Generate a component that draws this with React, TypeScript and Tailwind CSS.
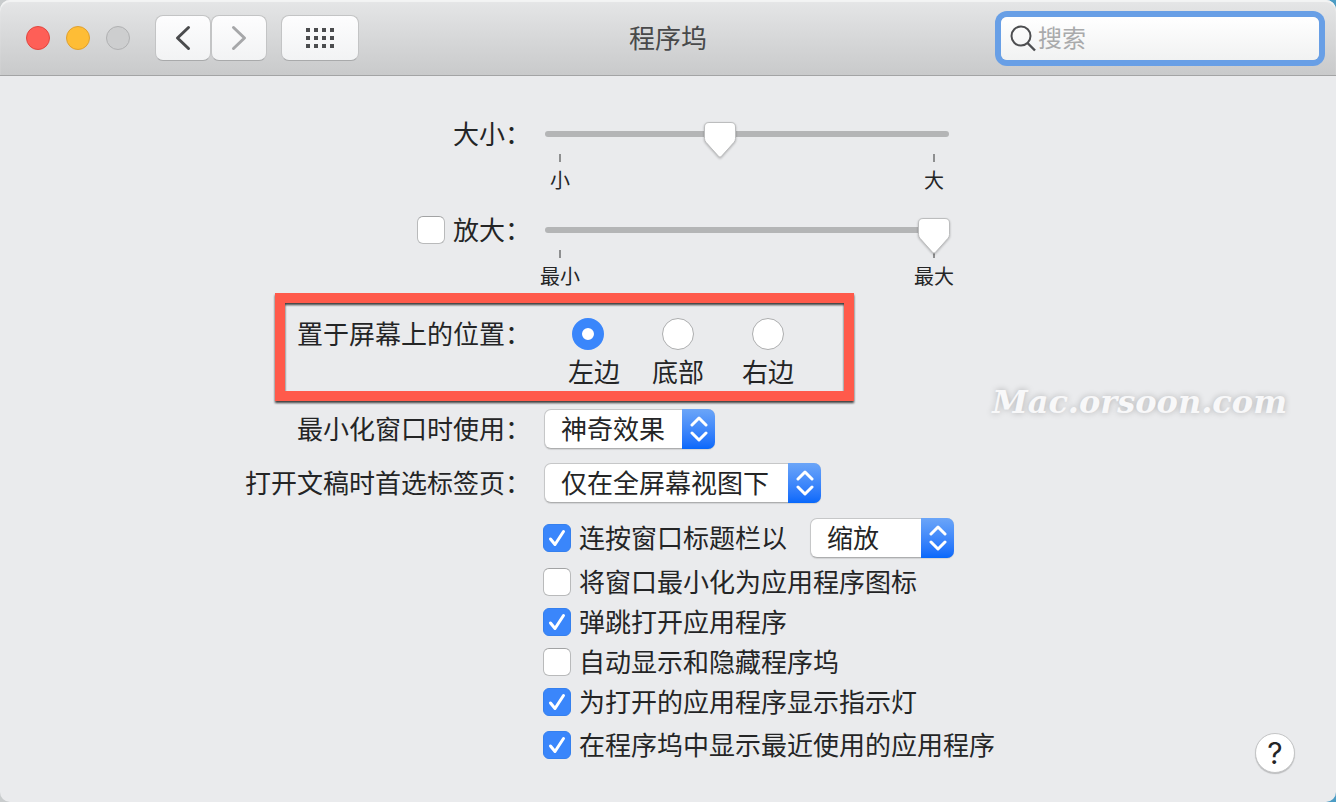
import React, { useState } from "react";

type RowProps = {
  label?: React.ReactNode;
  className?: string;
  children: React.ReactNode;
};

// Label on the left, control on the right
function Row({ label, className = "", children }: RowProps) {
  return (
    <div className={`grid grid-cols-[287px_1fr] items-start gap-x-3 ${className}`}>
      <div className="flex h-10 items-center justify-end gap-2 whitespace-nowrap">{label}</div>
      <div>{children}</div>
    </div>
  );
}

type CheckboxProps = {
  id: string;
  checked: boolean;
  onChange: (checked: boolean) => void;
};

function Checkbox({ id, checked, onChange }: CheckboxProps) {
  return (
    <span className="relative block size-7 shrink-0">
      <input
        id={id}
        type="checkbox"
        checked={checked}
        onChange={(e) => onChange(e.target.checked)}
        className="block size-7 appearance-none rounded-[6px] border border-[#b9babb] border-t-[#a2a3a4] bg-white checked:border-[#3580ee] checked:bg-[#3a86fb]"
      />
      {checked && (
        <svg viewBox="0 0 28 28" fill="none" className="pointer-events-none absolute inset-0 size-7">
          <path d="M7.5 15 12 20.5 20.5 7.5" stroke="#fff" strokeWidth="3" strokeLinecap="round" strokeLinejoin="round" />
        </svg>
      )}
    </span>
  );
}

type SliderProps = {
  id: string;
  value: number;
  onChange: (value: number) => void;
  min: string;
  max: string;
};

function Slider({ id, value, onChange, min, max }: SliderProps) {
  return (
    <div className="ml-[2px] w-[404px]">
      <div className="relative flex h-10 items-center">
        <div className="h-[6px] w-full rounded-full bg-[#b4b5b6]" />
        {/* Thumb travels between the two tick marks */}
        <div className="absolute inset-x-[15px] top-[7px] z-10">
          <svg
            viewBox="0 0 34 40"
            className="absolute top-0 h-10 w-[34px] -translate-x-1/2 drop-shadow-[0_1px_1px_rgba(0,0,0,0.25)]"
            style={{ left: `${value}%` }}
          >
            <path
              d="M6 1.5H28Q32.5 1.5 32.5 6V17.5Q32.5 19.5 31 21.3L18.2 35.6Q17 36.8 15.8 35.6L3 21.3Q1.5 19.5 1.5 17.5V6Q1.5 1.5 6 1.5Z"
              fill="#fff"
              stroke="#bcbdbe"
              strokeWidth="1"
            />
          </svg>
        </div>
        <input
          id={id}
          type="range"
          min={0}
          max={100}
          step="any"
          value={value}
          onChange={(e) => onChange(Number(e.target.value))}
          className="absolute inset-0 z-20 w-full cursor-default opacity-0"
        />
      </div>
      <div className="flex justify-between text-[20px] leading-6">
        {[min, max].map((text) => (
          <div key={text} className="flex w-[30px] flex-col items-center gap-[6px] whitespace-nowrap">
            <span className="h-2 w-[2px] bg-[#8e8f90]" />
            <span>{text}</span>
          </div>
        ))}
      </div>
    </div>
  );
}

type PopupProps = {
  id: string;
  label?: string;
  options: string[];
  className: string;
};

function Popup({ id, label, options, className }: PopupProps) {
  return (
    <div className={`relative ml-px h-10 ${className}`}>
      <select
        id={id}
        aria-label={label}
        className="block h-10 w-full appearance-none rounded-[7px] border border-[#c6c7c8] border-b-[#adaeaf] bg-white pb-[2px] pl-4 leading-9 shadow-[0_1px_1px_rgba(0,0,0,0.1)] outline-none"
      >
        {options.map((option) => (
          <option key={option}>{option}</option>
        ))}
      </select>
      <span className="pointer-events-none absolute inset-y-0 right-0 flex w-[33px] items-center justify-center rounded-r-[7px] bg-linear-to-b from-[#6ba5f8] to-[#0668fb]">
        <svg viewBox="0 0 20 26" fill="none" className="h-[26px] w-5">
          <path d="M3 9 10 2 17 9M3 17 10 24 17 17" stroke="#fff" strokeWidth="3" strokeLinecap="round" strokeLinejoin="round" />
        </svg>
      </span>
    </div>
  );
}

const toolbarButton =
  "flex items-center justify-center rounded-[8px] border border-[#c3c4c5] border-b-[#a9aaab] bg-linear-to-b from-[#fdfdfe] to-[#f2f3f4] h-[46px]";

const rowLabel = "pb-[3px] leading-9 whitespace-nowrap";

function TitleBar() {
  return (
    <header className="grid h-[76px] grid-cols-[1fr_auto_1fr] items-center rounded-t-[10px] border-b border-[#a3a4a5] bg-linear-to-b from-[#e5e6e7] to-[#c9cacb] pt-px shadow-[inset_0_2px_1px_#f3f4f4]">
      <div className="flex items-center pl-[26px]">
        <div className="flex gap-4">
          <button aria-label="关闭" className="size-6 rounded-full border border-[#e2463f] bg-[#fe5f57]" />
          <button aria-label="最小化" className="size-6 rounded-full border border-[#e0a02f] bg-[#febd36]" />
          <button aria-label="缩放窗口" className="size-6 rounded-full border border-[#b0b1b2] bg-[#cdcecf]" />
        </div>
        <div className="ml-[25px] flex">
          <button aria-label="后退" className={`${toolbarButton} w-14`}>
            <svg viewBox="0 0 16 26" fill="none" className="h-[26px] w-4">
              <path d="M13.5 2.5 2.5 13 13.5 23.5" stroke="#4a4b4d" strokeWidth="3" strokeLinecap="round" strokeLinejoin="round" />
            </svg>
          </button>
          <button aria-label="前进" className={`${toolbarButton} w-14`}>
            <svg viewBox="0 0 16 26" fill="none" className="h-[26px] w-4">
              <path d="M2.5 2.5 13.5 13 2.5 23.5" stroke="#a6a7a9" strokeWidth="3" strokeLinecap="round" strokeLinejoin="round" />
            </svg>
          </button>
        </div>
        <button aria-label="显示全部" className={`${toolbarButton} ml-[14px] w-[78px]`}>
          <span className="grid grid-cols-4 gap-1">
            {Array.from({ length: 12 }, (_, i) => (
              <span key={i} className="size-1 bg-[#4b4c4e]" />
            ))}
          </span>
        </button>
      </div>
      <h1 className="pb-[2px] text-[26px] leading-10 text-[#48494a]">程序坞</h1>
      <div className="flex justify-end pr-[17px]">
        <label className="flex h-[43px] w-[318px] items-center gap-[2px] rounded-[6px] bg-linear-to-b from-white to-[#f1f2f2] pl-[9px] ring-[6px] ring-[#689fe6]">
          <svg viewBox="0 0 26 28" fill="none" className="h-7 w-[26px] shrink-0">
            <circle cx="11" cy="12" r="9.5" stroke="#4d4e50" strokeWidth="2" />
            <path d="M17.5 19 25 26.5" stroke="#4d4e50" strokeWidth="2.4" />
          </svg>
          <input
            type="text"
            aria-label="搜索"
            placeholder="搜索"
            className="w-full bg-transparent pb-[3px] text-[24px] leading-9 outline-none placeholder:text-[#a9aaab]"
          />
        </label>
      </div>
    </header>
  );
}

const positions = ["左边", "底部", "右边"];

const toggles = [
  { id: "minimize-to-icon", text: "将窗口最小化为应用程序图标", className: "mt-1" },
  { id: "bounce", text: "弹跳打开应用程序", className: "" },
  { id: "autohide", text: "自动显示和隐藏程序坞", className: "" },
  { id: "indicators", text: "为打开的应用程序显示指示灯", className: "" },
  { id: "recents", text: "在程序坞中显示最近使用的应用程序", className: "mt-[3px]" },
];

export default function App() {
  const [size, setSize] = useState(42.7);
  const [magnification, setMagnification] = useState(100);
  const [position, setPosition] = useState("左边");
  const [checks, setChecks] = useState<Record<string, boolean>>({
    "double-click": true,
    bounce: true,
    indicators: true,
    recents: true,
  });

  const setCheck = (id: string, value: boolean) => setChecks({ ...checks, [id]: value });

  return (
    <div className="bg-linear-to-r from-[#c9cccd] to-[#4b9cc4] font-['Noto_Sans_CJK_SC',sans-serif] text-[26px] text-[#242526]">
      <div className="relative flex min-h-screen flex-col rounded-[10px] bg-[#eaebed]">
        <TitleBar />

        <main className="grid flex-1 grid-cols-[1fr_848px_1fr] pt-[38px] pb-[29px]">
          <form className="col-start-2">
            <Row
              className="h-20"
              label={
                <label htmlFor="size" className={rowLabel}>
                  大小：
                </label>
              }
            >
              <Slider id="size" value={size} onChange={setSize} min="小" max="大" />
            </Row>

            <Row
              className="mt-4 h-20"
              label={
                <>
                  <Checkbox
                    id="magnify"
                    checked={!!checks.magnify}
                    onChange={(value) => setCheck("magnify", value)}
                  />
                  <label htmlFor="magnify" className={rowLabel}>
                    放大：
                  </label>
                </>
              }
            >
              <Slider id="magnification" value={magnification} onChange={setMagnification} min="最小" max="最大" />
            </Row>

            <div className="relative mt-6">
              <Row
                label={
                  <span id="position-label" className={rowLabel}>
                    置于屏幕上的位置：
                  </span>
                }
              >
                <div role="radiogroup" aria-labelledby="position-label" className="flex h-[75px] pt-1">
                  {positions.map((text) => (
                    <label key={text} className="group flex w-[90px] flex-col items-center gap-[5px] leading-8">
                      <input
                        type="radio"
                        name="position"
                        value={text}
                        checked={position === text}
                        onChange={() => setPosition(text)}
                        className="size-8 appearance-none rounded-full border border-[#adaeaf] bg-white checked:border-[10px] checked:border-[#3a86fb]"
                      />
                      <span className="group-first:pl-3">{text}</span>
                    </label>
                  ))}
                </div>
              </Row>
              {/* Highlight frame around the position setting */}
              <div className="pointer-events-none absolute -top-[21px] -bottom-3 left-[31px] w-[579px] border-[10px] border-[#ff5a4b] drop-shadow-[0_2px_1px_rgba(0,0,0,0.75)]" />
            </div>

            <Row
              className="mt-5"
              label={
                <label htmlFor="effect" className={rowLabel}>
                  最小化窗口时使用：
                </label>
              }
            >
              <Popup id="effect" options={["神奇效果", "缩放效果"]} className="w-[171px]" />
            </Row>

            <Row
              className="mt-[14px]"
              label={
                <label htmlFor="tabs" className={rowLabel}>
                  打开文稿时首选标签页：
                </label>
              }
            >
              <Popup id="tabs" options={["仅在全屏幕视图下", "始终", "手动"]} className="w-[277px]" />
            </Row>

            <Row className="mt-[15px]">
              <div className="flex h-10 items-center gap-2">
                <Checkbox
                  id="double-click"
                  checked={!!checks["double-click"]}
                  onChange={(value) => setCheck("double-click", value)}
                />
                <label htmlFor="double-click" className={`${rowLabel} w-[222px]`}>
                  连按窗口标题栏以
                </label>
                <Popup id="action" label="连按操作" options={["缩放", "最小化"]} className="w-[144px]" />
              </div>
            </Row>

            {toggles.map(({ id, text, className }) => (
              <Row key={id} className={className}>
                <div className="flex h-10 items-center gap-2">
                  <Checkbox id={id} checked={!!checks[id]} onChange={(value) => setCheck(id, value)} />
                  <label htmlFor={id} className={rowLabel}>
                    {text}
                  </label>
                </div>
              </Row>
            ))}
          </form>

          <div className="flex items-end justify-end pr-[41px]">
            <button
              aria-label="帮助"
              className="size-10 rounded-full border border-[#c4c5c6] bg-white font-[Inter,sans-serif] text-[30px] leading-9 font-normal shadow-[0_1px_1px_rgba(0,0,0,0.2)]"
            >
              ?
            </button>
          </div>
        </main>

        <p className="pointer-events-none absolute top-[382px] right-[49px] font-['DejaVu_Serif',serif] text-[32px] leading-10 font-bold text-[#f8f8f9] italic [text-shadow:0_0_6px_rgba(0,0,0,0.25)]">
          Mac.orsoon.com
        </p>
      </div>
    </div>
  );
}
